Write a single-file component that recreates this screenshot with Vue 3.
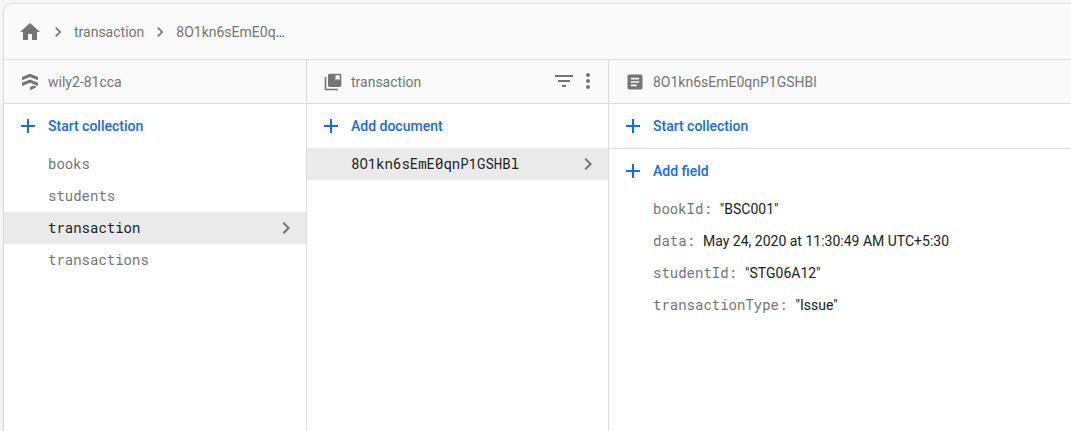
<script setup>
const icons = {
  home: 'M10 20v-6h4v6h5v-8h3L12 3 2 12h3v8z',
  chevron: 'M10 6L8.59 7.41 13.17 12l-4.58 4.59L10 18l6-6z',
  plus: 'M19 13h-6v6h-2v-6H5v-2h6V5h2v6h6z',
  filter: 'M10 18h4v-2h-4v2zM3 6v2h18V6H3zm3 7h12v-2H6v2z',
  more: 'M12 8c1.1 0 2-.9 2-2s-.9-2-2-2-2 .9-2 2 .9 2 2 2zm0 2c-1.1 0-2 .9-2 2s.9 2 2 2 2-.9 2-2-.9-2-2-2zm0 6c-1.1 0-2 .9-2 2s.9 2 2 2 2-.9 2-2-.9-2-2-2z',
  database: 'M12 2L21.600 5.900v3.900L12 5.900 2.400 9.800V5.900zM12 9L21.600 12.900v3.900L12 12.900 2.400 16.800v-3.900zM12 18.100l4.500-1.900 3.300 1.400c-.6 1-1.500 1.500-2.500 1.900L12 21.800z',
  collection: 'M4 6H2v14c0 1.100.9 2 2 2h14v-2H4V6zM20 2H8c-1.100 0-2 .9-2 2v12c0 1.100.9 2 2 2h12c1.100 0 2-.9 2-2V4c0-1.100-.9-2-2-2zm0 8l-2.500-1.500L15 10V4h5v6z',
  document: 'M19 3H5c-1.100 0-2 .9-2 2v14c0 1.100.9 2 2 2h14c1.100 0 2-.9 2-2V5c0-1.100-.9-2-2-2zm-5 14H7v-2h7v2zm3-4H7v-2h10v2zm0-4H7V7h10v2z',
}

const collections = ['books', 'students', 'transaction', 'transactions']
const selected = 'transaction'
const documentId = '8O1kn6sEmE0qnP1GSHBl'
const fields = [
  { name: 'bookId', value: '"BSC001"' },
  { name: 'data', value: 'May 24, 2020 at 11:30:49 AM UTC+5:30' },
  { name: 'studentId', value: '"STG06A12"' },
  { name: 'transactionType', value: '"Issue"' },
]
</script>

<template>
  <main class="page">
    <div class="card">
      <nav class="crumbs">
        <svg class="i24" viewBox="0 0 24 24"><path :d="icons.home" /></svg>
        <svg class="i20 sep" viewBox="0 0 24 24"><path :d="icons.chevron" /></svg>
        <span class="crumb">transaction</span>
        <svg class="i20 sep" viewBox="0 0 24 24"><path :d="icons.chevron" /></svg>
        <span class="crumb">8O1kn6sEmE0q<span class="dots">…</span></span>
      </nav>
      <div class="columns">
        <section class="column">
          <header class="head">
            <svg class="i20" viewBox="0 0 24 24"><path :d="icons.database" /></svg>
            <span>wily2-81cca</span>
          </header>
          <button class="action">
            <svg class="i24" viewBox="0 0 24 24"><path :d="icons.plus" /></svg>Start collection
          </button>
          <div v-for="c in collections" :key="c" class="row" :class="{ selected: c === selected }">
            <span>{{ c }}</span>
            <svg v-if="c === selected" class="i24" viewBox="0 0 24 24"><path :d="icons.chevron" /></svg>
          </div>
        </section>
        <section class="column">
          <header class="head">
            <svg class="i20" viewBox="0 0 24 24"><path :d="icons.collection" /></svg>
            <span class="title">transaction</span>
            <div class="tools">
              <svg class="i24" viewBox="0 0 24 24"><path :d="icons.filter" /></svg>
              <svg class="i24" viewBox="0 0 24 24"><path :d="icons.more" /></svg>
            </div>
          </header>
          <button class="action">
            <svg class="i24" viewBox="0 0 24 24"><path :d="icons.plus" /></svg>Add document
          </button>
          <div class="row selected">
            <span>{{ documentId }}</span>
            <svg class="i24" viewBox="0 0 24 24"><path :d="icons.chevron" /></svg>
          </div>
        </section>
        <section class="column">
          <header class="head">
            <svg class="i20" viewBox="0 0 24 24"><path :d="icons.document" /></svg>
            <span>{{ documentId }}</span>
          </header>
          <button class="action ruled">
            <svg class="i24" viewBox="0 0 24 24"><path :d="icons.plus" /></svg>Start collection
          </button>
          <button class="action">
            <svg class="i24" viewBox="0 0 24 24"><path :d="icons.plus" /></svg>Add field
          </button>
          <div v-for="f in fields" :key="f.name" class="row field">
            <span>{{ f.name }}:</span>
            <span class="value">{{ f.value }}</span>
          </div>
        </section>
      </div>
    </div>
  </main>
</template>

<style>
body { margin: 0; overflow: hidden; }
</style>

<style scoped>
.page {
  box-sizing: border-box;
  height: 431px;
  padding: 4px 0 0 4px;
  overflow: hidden;
  background: #f5f6f8;
  font: 14px/20px Roboto, sans-serif;
  color: #757575;
}
.card {
  display: flex;
  flex-direction: column;
  width: 1080px;
  height: 440px;
  border-radius: 8px;
  background: #fff;
  box-shadow: 0 0 2px rgba(0, 0, 0, .28), 0 1px 3px rgba(0, 0, 0, .1);
}
svg { flex: none; fill: currentColor; }
.i24 { width: 24px; height: 24px; }
.i20 { width: 20px; height: 20px; }
.crumbs {
  display: flex;
  align-items: center;
  height: 55px;
  padding-left: 14px;
  background: #fafafa;
  border-bottom: 1px solid #dcdcdc;
  border-radius: 8px 0 0;
}
.crumb { padding-top: 1px; }
.dots { color: #424242; }
.sep { margin: 1px 6px 0; }
.columns {
  display: grid;
  grid-template-columns: 303px 302px 1fr;
  flex: 1;
}
.column { border-right: 1px solid #dcdcdc; }
.head {
  display: flex;
  align-items: center;
  height: 43px;
  padding: 0 8px 0 16px;
  gap: 8px;
  background: #fafafa;
  border-bottom: 1px solid #dcdcdc;
}
.head span { padding-top: 1px; }
.tools { display: flex; margin: 0 0 1px auto; }
.action {
  display: flex;
  align-items: center;
  box-sizing: content-box;
  width: calc(100% - 12px);
  height: 44px;
  padding: 0 0 0 12px;
  gap: 8px;
  border: 0;
  background: none;
  color: #1769f0;
  font: 500 14px/20px Roboto, sans-serif;
}
.ruled { border-bottom: 1px solid #dcdcdc; }
.row {
  display: flex;
  align-items: center;
  justify-content: space-between;
  box-sizing: border-box;
  height: 32px;
  padding: 0 8px 0 44px;
  font-family: "Roboto Mono", "DejaVu Sans Mono", monospace;
}
.selected { background: #eaeaea; color: #212121; }
.selected svg { color: #757575; }
.field { justify-content: flex-start; gap: 8px; }
.value { color: #212121; font-family: Roboto, sans-serif; }
</style>
